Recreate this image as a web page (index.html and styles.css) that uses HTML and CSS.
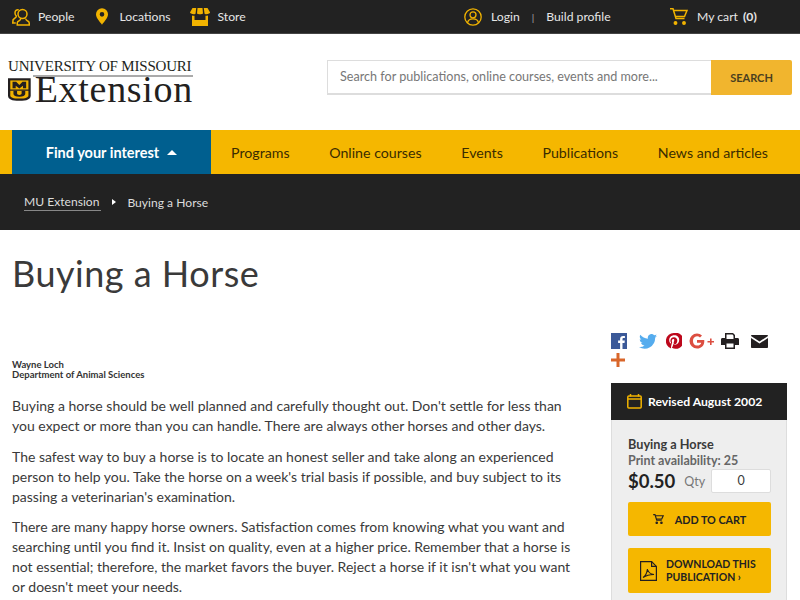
FILE: index.html
```html
<!DOCTYPE html>
<html lang="en">
<head>
    <meta charset="UTF-8">
    <meta name="viewport" content="width=device-width, initial-scale=1.0">
    <title>Buying a Horse</title>
    <link rel="stylesheet" href="styles.css">
</head>
<body>

    <!-- top bar -->
    <div class="topbar">
        <div class="top-left">
            <a class="top-link people">
                <svg class="top-icon" width="18" height="18" viewBox="0 0 24 24" fill="none" stroke="#f1b300" stroke-width="2"><path d="M9 2.500c-3-.6-5 1.200-5 4 0 1.800.8 3.200 1.800 4.100 0 1.300-.5 1.900-1.600 2.500L1.500 15.500 1 20h4"/><circle cx="14" cy="8" r="6"/><path d="M11.500 14c.3 1.600-.5 2.300-2 3-1.500.6-2.500 1.500-2.500 3v2.500h16V20c0-1.500-1-2.400-2.500-3-1.500-.7-2.300-1.400-2-3"/></svg>
                People
            </a>
            <a class="top-link locations">
                <svg class="top-icon" width="12" height="17" viewBox="0 0 14 19"><path fill="#f1b300" fill-rule="evenodd" d="M7 0a7 7 0 0 1 7 7c0 4-4 8.500-7 12C4 15.500 0 11 0 7a7 7 0 0 1 7-7zm0 4.300a2.700 2.700 0 1 0 0 5.400 2.700 2.700 0 0 0 0-5.400z"/></svg>
                Locations
            </a>
            <a class="top-link store">
                <svg class="top-icon" width="20" height="18" viewBox="0 0 20 18"><path fill="#f1b300" d="M2.500 0h3.700L5.600 5.500c-.2 1-3 1-5-.2-.5-.2-.6-.6-.5-1zM7.500 0h5l.5 5.500c-.5 1-5.500 1-6 0zM13.800 0h3.700L20 4.300c.1.400 0 .8-.5 1-2 1.200-4.800 1.200-5 .2z"/><path fill="#f1b300" fill-rule="evenodd" d="M2 7.500c1 .3 1.800.3 2.500.2V12h11V7.700c.7.100 1.500.1 2.500-.2V18H2z"/></svg>
                Store
            </a>
        </div>
        <div class="top-account">
            <svg class="top-icon" width="18" height="18" viewBox="0 0 18 18" fill="none" stroke="#f1b300" stroke-width="1.300"><circle cx="9" cy="9" r="8.200"/><circle cx="9" cy="6.800" r="3"/><path d="M3.500 14.800c.5-2.800 2.500-4 5.500-4s5 1.200 5.500 4"/></svg>
            <a class="top-link">Login</a>
            <span class="sep">|</span>
            <a class="top-link">Build profile</a>
        </div>
        <div class="top-cart">
            <svg class="top-icon" width="18" height="17" viewBox="0 0 18 17" fill="none" stroke="#f1b300" stroke-width="1.500"><path d="M0 .8h3l3 9.700h8.500"/><path d="M3.500 2.500H17l-2.500 6H5.500"/><circle cx="5.500" cy="15" r="1.200" fill="#f1b300"/><circle cx="14" cy="15" r="1.200" fill="#f1b300"/></svg>
            <a class="top-link">My cart</a>
            <b>(0)</b>
        </div>
    </div>

    <!-- logo and search -->
    <div class="header">
        <div class="logo">
            <div class="logo-top">UNIVERSITY OF MISSOURI</div>
            <div class="logo-rule"></div>
            <div class="logo-bottom">
                <svg width="25" height="25" viewBox="0 0 25 25">
                    <path fill="#231f20" d="M0 0h25v19c0 4-4 6-12.500 6S0 23 0 19z"/>
                    <path fill="#f1b300" d="M2.500 2.500h20v10h-20z"/>
                    <path fill="#231f20" d="M5 4h4l3.500 3.500L16 4h4v7h-3.500V8.500l-4 3-4-3V11H5z"/>
                    <path fill="#f1b300" d="M2.500 14h20v5c0 2-3 3.500-10 3.500s-10-1.500-10-3.500z"/>
                    <path fill="#231f20" d="M6 14h4v3c0 1 1 1.500 2.500 1.500S15 18 15 17v-3h4v3.500c0 1.800-2.500 3-6.500 3s-6.500-1.200-6.500-3z"/>
                </svg>
                <span>Extension</span>
            </div>
        </div>
        <div class="search">
            <div class="search-input">Search for publications, online courses, events and more...</div>
            <div class="search-btn">SEARCH</div>
        </div>
    </div>

    <!-- main nav -->
    <div class="nav">
        <div class="interest">Find your interest <span class="arrow-up"></span></div>
        <div class="nav-links">
            <a>Programs</a>
            <a>Online courses</a>
            <a>Events</a>
            <a>Publications</a>
            <a>News and articles</a>
        </div>
    </div>

    <div class="breadcrumb">
        <a>MU Extension</a>
        <span class="arrow-right"></span>
        <span>Buying a Horse</span>
    </div>

    <h1>Buying a Horse</h1>

    <div class="content">
        <div class="article">
            <p class="author">Wayne Loch<br>Department of Animal Sciences</p>
            <p>Buying a horse should be well planned and carefully thought out. Don't settle for less than you expect or more than you can handle. There are always other horses and other days.</p>
            <p>The safest way to buy a horse is to locate an honest seller and take along an experienced person to help you. Take the horse on a week's trial basis if possible, and buy subject to its passing a veterinarian's examination.</p>
            <p>There are many happy horse owners. Satisfaction comes from knowing what you want and searching until you find it. Insist on quality, even at a higher price. Remember that a horse is not essential; therefore, the market favors the buyer. Reject a horse if it isn't what you want or doesn't meet your needs.</p>
        </div>

        <div class="sidebar">
            <div class="share">
                <svg class="share-fb" width="16" height="16" viewBox="0 0 16 16"><path fill="#3b5998" d="M0 0h16v16h-4.500v-6h2l.3-2.400h-2.300V6.200c0-.7.2-1.100 1.200-1.100h1.200V3c-.3 0-1-.1-1.800-.1-1.800 0-3 1.100-3 3.100v1.600h-2V10h2v6H0z"/></svg>
                <svg class="share-tw" width="18" height="15" viewBox="0 0 24 20"><path fill="#55acee" d="M24 2.400c-.9.400-1.800.7-2.800.8 1-.6 1.800-1.600 2.200-2.700-1 .6-2 1-3.100 1.200A4.900 4.900 0 0 0 11.900 6.200C7.800 6 4.200 4 1.700.9c-1.300 2.200-.6 5.100 1.500 6.600-.8 0-1.600-.2-2.200-.6 0 2.300 1.600 4.500 4 5-.7.200-1.500.2-2.200.1.600 2 2.400 3.400 4.600 3.400A9.900 9.900 0 0 1 0 17.400 14 14 0 0 0 21.500 5c1-.7 1.800-1.600 2.500-2.600z"/></svg>
                <svg class="share-pi" width="16" height="16" viewBox="0 0 16 16"><path fill="#bd081c" fill-rule="evenodd" d="M8 0a8 8 0 0 0-2.900 15.500c-.1-.6-.1-1.600 0-2.300l1-4s-.3-.5-.3-1.200c0-1.100.6-2 1.500-2 .7 0 1 .5 1 1.100 0 .7-.4 1.700-.7 2.700-.2.800.4 1.400 1.200 1.400 1.400 0 2.500-1.500 2.500-3.700 0-1.900-1.400-3.300-3.300-3.300-2.300 0-3.600 1.700-3.600 3.500 0 .7.300 1.400.6 1.800l-.3 1.200C4 10 3.200 8.700 3.200 7.100c0-2.500 1.800-4.800 5.200-4.800 2.700 0 4.800 1.900 4.800 4.500 0 2.700-1.700 4.900-4 4.900-.8 0-1.600-.4-1.800-.9l-.5 1.900c-.2.700-.6 1.500-1 2.100A8 8 0 1 0 8 0z"/></svg>
                <svg class="share-gp" width="25" height="16" viewBox="0 0 25 16"><path fill="#dc4e41" d="M8 7v2.700h4.200c-.3 1.700-1.800 2.900-4.200 2.900a4.700 4.700 0 0 1 0-9.300c1.200 0 2.200.4 3 1.100l2-2A7.500 7.500 0 0 0 8 .5a7.500 7.500 0 1 0 0 15c4.300 0 7.300-3 7.300-7.300 0-.4 0-.8-.1-1.200zM21 5.500v2.500h-2.500v1.600H21v2.400h1.600V9.600H25V8h-2.400V5.500z"/></svg>
                <svg class="share-pr" width="18" height="16" viewBox="0 0 18 16"><path fill="#231f20" fill-rule="evenodd" d="M4 0h8l2 2v3h2.500c1 0 1.500.7 1.500 1.500V12h-4v4H4v-4H0V6.500C0 5.700.5 5 1.500 5H4zm1.500 1.500V6h7V2.700l-1-1.200zm0 9v4h7v-4z"/></svg>
                <svg width="17" height="13" viewBox="0 0 17 13"><path fill="#231f20" d="M1 0h15c.5 0 1 .4 1 1L8.500 6.500 0 1c0-.6.500-1 1-1zM0 3l8.500 5.500L17 3v9c0 .6-.5 1-1 1H1c-.5 0-1-.4-1-1z"/></svg>
                <svg width="14" height="14" viewBox="0 0 14 14"><path fill="#d9662a" d="M5.500 0h3v5.500H14v3H8.500V14h-3V8.500H0v-3h5.500z"/></svg>
            </div>

            <div class="card">
                <div class="card-head">
                    <svg width="15" height="15" viewBox="0 0 15 15" fill="none" stroke="#f1b300" stroke-width="1.500"><rect x=".8" y="2" width="13.400" height="12" rx="1"/><path d="M.8 5h13.400M3.500 0v2.500M11.500 0v2.500"/></svg>
                    <span>Revised August 2002</span>
                </div>
                <div class="card-body">
                    <div class="pub-title">Buying a Horse</div>
                    <div class="pub-avail">Print availability: 25</div>
                    <div class="price-row">
                        <span class="price">$0.50</span>
                        <span class="qty">Qty</span>
                        <div class="qty-input">0</div>
                    </div>
                    <div class="btn">
                        <svg width="11" height="10" viewBox="0 0 18 17" fill="none" stroke="#231f20" stroke-width="2"><path d="M0 1h3l3 9.500h8.500"/><path d="M3.500 3H17l-2.500 5.500H5.500"/><circle cx="6" cy="15" r="1.200"/><circle cx="14" cy="15" r="1.200"/></svg>
                        ADD TO CART
                    </div>
                    <div class="btn btn-pdf">
                        <svg width="17" height="20" viewBox="0 0 17 20" fill="none" stroke="#231f20" stroke-width="1.200"><path d="M.6.600h11l4.800 4.800v14H.6z"/><path d="M11.600.6v4.800h4.800"/><path d="M3 16.500c2.500-1.500 4-5 4.500-8.500.5 3 2.500 5 6.500 5.500-3.500 0-8 1-11 3z"/></svg>
                        <span>DOWNLOAD THIS<br>PUBLICATION &#8250;</span>
                    </div>
                </div>
            </div>
        </div>
    </div>

</body>
</html>
```

FILE: styles.css
```css
html, body {
    height: 600px;
    overflow: hidden;
}

body {
    margin: 0;
    font-family: Lato, Arial, sans-serif;
    color: #3a3a3a;
    background-color: white;
}

.topbar {
    display: flex;
    align-items: center;
    height: 33px;
    background-color: #222;
    border-bottom: 1px solid #444;
    color: #e6e6e6;
    font-size: 12.200px;
}

.top-left {
    display: flex;
    align-items: center;
    width: 464px;
    padding-left: 12px;
    box-sizing: border-box;
}

.top-link {
    display: flex;
    align-items: center;
}

.people .top-icon {
    margin-right: 8px;
}

.locations {
    margin-left: 22px;
}

.locations .top-icon {
    margin-right: 11px;
}

.store {
    margin-left: 19px;
}

.store .top-icon {
    margin-right: 8px;
}

.top-account {
    display: flex;
    align-items: center;
    width: 206px;
}

.top-account .top-icon {
    margin-right: 9px;
}

.sep {
    margin: 0 12px;
    color: #aaa;
    font-size: 10px;
}

.top-cart {
    display: flex;
    align-items: center;
}

.top-cart .top-icon {
    margin-right: 9px;
}

.top-cart b {
    margin-left: 5px;
}

.header {
    display: flex;
    justify-content: space-between;
    align-items: center;
    height: 96px;
    padding: 0 8px;
}

.logo {
    width: 185px;
    margin-top: -4px;
    color: #231f20;
    font-family: "Liberation Serif", serif;
}

.logo-top {
    font-size: 15px;
    line-height: 15px;
    letter-spacing: -0.200px;
    white-space: nowrap;
}

.logo-rule {
    height: 2px;
    margin: 1px 0 0 25px;
    background-color: #aaa;
}

.logo-bottom {
    display: flex;
    align-items: flex-end;
    height: 25px;
}

.logo-bottom span {
    margin-left: 4px;
    font-size: 38px;
    line-height: 25px;
    letter-spacing: 0.700px;
}

.search {
    display: flex;
    width: 465px;
    height: 35px;
    margin-top: -10px;
}

.search-input {
    flex: 1;
    padding-left: 12px;
    border: 1px solid #ddd;
    border-bottom-width: 2px;
    border-right: none;
    color: #777;
    font-size: 12.600px;
    line-height: 32px;
}

.search-btn {
    width: 81px;
    background-color: #f1b52e;
    border-radius: 0 2px 2px 0;
    color: #4a3f20;
    font-size: 11px;
    font-weight: bold;
    line-height: 35px;
    text-align: center;
}

.nav {
    display: flex;
    height: 44px;
    padding-left: 12px;
    background-color: #f5b700;
    font-size: 14.200px;
}

.interest {
    display: flex;
    justify-content: center;
    align-items: center;
    width: 199px;
    background-color: #005f8f;
    color: white;
    font-size: 14.500px;
    font-weight: bold;
}

.arrow-up {
    width: 0;
    height: 0;
    margin-left: 8px;
    border-left: 5px solid transparent;
    border-right: 5px solid transparent;
    border-bottom: 5px solid white;
}

.nav-links {
    display: flex;
    flex: 1;
    justify-content: space-between;
    align-items: center;
    padding: 0 32px 0 20px;
    color: #3a2c00;
}

.breadcrumb {
    display: flex;
    align-items: center;
    height: 56px;
    padding-left: 24px;
    background-color: #222;
    color: #ddd;
    font-size: 12.100px;
}

.breadcrumb a {
    padding: 0 2px 1px 0;
    border-bottom: 1px solid #888;
}

.arrow-right {
    width: 0;
    height: 0;
    margin: 0 11px;
    border-top: 3px solid transparent;
    border-bottom: 3px solid transparent;
    border-left: 4px solid white;
}

h1 {
    margin: 0;
    padding: 23px 12px 0;
    color: #3a3a3a;
    font-size: 36px;
    font-weight: normal;
    line-height: 40px;
    letter-spacing: 0.500px;
}

.content {
    display: flex;
    justify-content: space-between;
    padding: 0 13px 0 12px;
}

.article {
    width: 560px;
    padding-top: 67px;
    font-size: 14px;
    line-height: 20px;
}

.article p {
    margin: 0 0 10.500px;
}

.article .author {
    margin-bottom: 16px;
    color: #333;
    font-size: 9.500px;
    font-weight: bold;
    line-height: 10px;
}

.sidebar {
    width: 176px;
    padding-top: 40px;
}

.share {
    display: flex;
    flex-wrap: wrap;
    align-items: center;
    row-gap: 4px;
    width: 170px;
}

.share-fb,
.share-pr {
    margin-right: 12px;
}

.share-tw {
    margin-right: 9px;
}

.share-pi,
.share-gp {
    margin-right: 7px;
}

.card {
    margin-top: 16px;
    background-color: #eee;
    border: 1px solid #ddd;
    border-top: none;
}

.card-head {
    display: flex;
    align-items: center;
    height: 37px;
    margin: 0 -1px;
    padding-left: 16px;
    background-color: #222;
    color: white;
    font-size: 12.200px;
    font-weight: bold;
}

.card-head span {
    margin-left: 6px;
}

.card-body {
    padding: 17px 15px 20px 16px;
}

.pub-title {
    font-size: 12.700px;
    font-weight: bold;
    line-height: 15px;
}

.pub-avail {
    margin: 1px 0;
    color: #666;
    font-size: 12.500px;
    font-weight: bold;
    line-height: 15px;
}

.price-row {
    display: flex;
    align-items: center;
    margin-bottom: 9px;
}

.price {
    color: #222;
    font-size: 18.500px;
    font-weight: bold;
}

.qty {
    margin-left: 9px;
    color: #777;
    font-size: 12.500px;
}

.qty-input {
    width: 60px;
    height: 22px;
    margin-left: 6px;
    background-color: white;
    border: 1px solid #ddd;
    border-radius: 2px;
    font-size: 12.500px;
    line-height: 22px;
    text-align: center;
}

.btn {
    display: flex;
    justify-content: center;
    align-items: center;
    gap: 11px;
    height: 34px;
    margin-bottom: 12px;
    background-color: #f5b700;
    border-radius: 2px;
    color: #222;
    font-size: 10.800px;
    font-weight: bold;
}

.btn-pdf {
    justify-content: flex-start;
    gap: 9px;
    height: 45px;
    padding-left: 12px;
    font-size: 10.500px;
    line-height: 13px;
}
```
